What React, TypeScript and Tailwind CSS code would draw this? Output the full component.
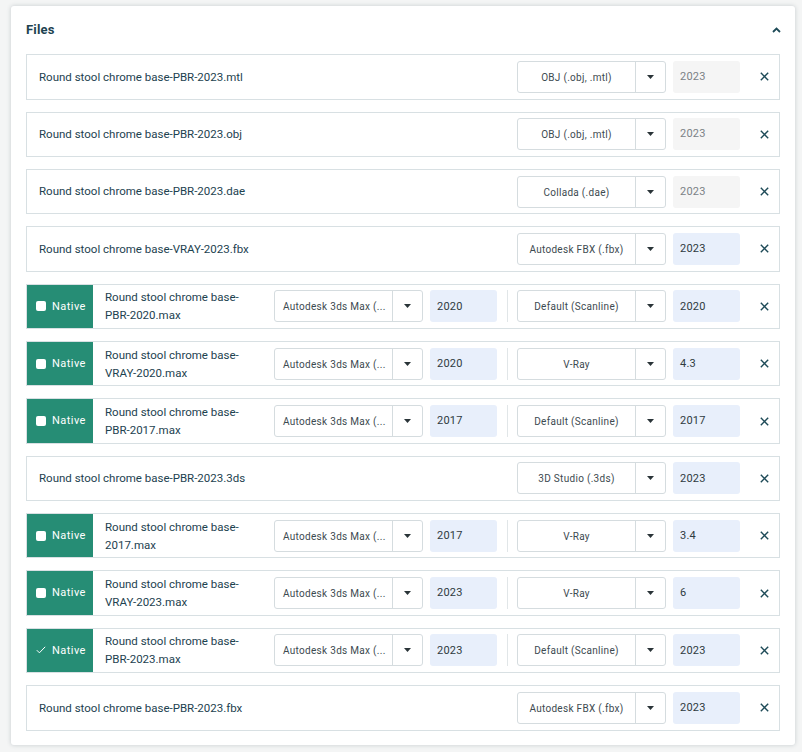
import React from 'react';

type FileRow = {
  name: string;
  format: string;
  version: string;
  disabled?: boolean;
  native?: { checked: boolean; appVersion: string };
};

const files: FileRow[] = [
  { name: 'Round stool chrome base-PBR-2023.mtl', format: 'OBJ (.obj, .mtl)', version: '2023', disabled: true },
  { name: 'Round stool chrome base-PBR-2023.obj', format: 'OBJ (.obj, .mtl)', version: '2023', disabled: true },
  { name: 'Round stool chrome base-PBR-2023.dae', format: 'Collada (.dae)', version: '2023', disabled: true },
  { name: 'Round stool chrome base-VRAY-2023.fbx', format: 'Autodesk FBX (.fbx)', version: '2023' },
  { name: 'Round stool chrome base-PBR-2020.max', format: 'Default (Scanline)', version: '2020', native: { checked: false, appVersion: '2020' } },
  { name: 'Round stool chrome base-VRAY-2020.max', format: 'V-Ray', version: '4.3', native: { checked: false, appVersion: '2020' } },
  { name: 'Round stool chrome base-PBR-2017.max', format: 'Default (Scanline)', version: '2017', native: { checked: false, appVersion: '2017' } },
  { name: 'Round stool chrome base-PBR-2023.3ds', format: '3D Studio (.3ds)', version: '2023' },
  { name: 'Round stool chrome base-2017.max', format: 'V-Ray', version: '3.4', native: { checked: false, appVersion: '2017' } },
  { name: 'Round stool chrome base-VRAY-2023.max', format: 'V-Ray', version: '6', native: { checked: false, appVersion: '2023' } },
  { name: 'Round stool chrome base-PBR-2023.max', format: 'Default (Scanline)', version: '2023', native: { checked: true, appVersion: '2023' } },
  { name: 'Round stool chrome base-PBR-2023.fbx', format: 'Autodesk FBX (.fbx)', version: '2023' },
];

const Select = ({ label, left }: { label: string; left?: boolean }) => (
  <div className="flex h-[32px] w-[149px] shrink-0 rounded-[3px] border border-[#d5dcdf] bg-white text-[#3d4a50]">
    <div className={`flex min-w-0 w-[118px] items-center border-r border-[#d5dcdf] pt-[1px] text-[10px] tracking-[0.3px] whitespace-nowrap ${left ? 'justify-start pl-[8px]' : 'justify-center'}`}>
      {label}
    </div>
    <div className="flex flex-1 items-center justify-center">
      <svg width="7" height="4" viewBox="0 0 7 4"><path d="M0 0h7L3.5 4z" fill="#2a3438" /></svg>
    </div>
  </div>
);

const VersionInput = ({ value, disabled }: { value: string; disabled?: boolean }) => (
  <div className={`ml-[7px] flex h-[32px] w-[67px] shrink-0 items-center rounded-[3px] pl-[7px] pt-[1px] text-[11px] tracking-[0.25px] ${disabled ? 'bg-[#f5f5f5] text-[#7b8286]' : 'bg-[#e8effb] text-[#2f3b40]'}`}>
    {value}
  </div>
);

const Row = ({ file }: { file: FileRow }) => (
  <div className="flex h-[45.36px] items-center border border-[#d8e0e3] bg-white">
    {file.native ? (
      <>
        <div className="flex h-full w-[66px] shrink-0 items-center bg-[#268d75] pl-[9px] text-[11px] tracking-[0.45px] text-white">
          {file.native.checked ? (
            <svg className="w-[10px] shrink-0" width="10" height="8" viewBox="0 0 10 8" fill="none"><path d="M.8 4.2 3.4 6.8 9.2.8" stroke="#fff" strokeWidth="1" /></svg>
          ) : (
            <span className="h-[10px] w-[10px] shrink-0 rounded-[2px] bg-white" />
          )}
          <span className="ml-[6px] pt-[1px]">Native</span>
        </div>
        <div className="w-[181px] shrink-0 pl-[12px] pr-[20px] text-[11.5px] leading-[18px] text-[#1d4250]">{file.name}</div>
        <Select label="Autodesk 3ds Max (..." left />
        <VersionInput value={file.native.appVersion} />
        <div className="mx-[9.5px] h-[32px] w-px shrink-0 bg-[#e1e6e8]" />
      </>
    ) : (
      <div className="flex-1 pl-[12px] pt-[1px] text-[11.5px] text-[#1d4250]">{file.name}</div>
    )}
    <Select label={file.format} />
    <VersionInput value={file.version} disabled={file.disabled} />
    <div className="flex w-[39px] shrink-0 items-center justify-end pr-[10px]">
      <svg width="9" height="9" viewBox="0 0 9 9" fill="none"><path d="M.8.8l7.4 7.4M8.2.8 .8 8.2" stroke="#1d4a57" strokeWidth="1.4" /></svg>
    </div>
  </div>
);

export default function App() {
  return (
    <div className="min-h-screen bg-[#f4f5f5] pl-[11px] pt-[6px]" style={{ fontFamily: 'Roboto, "Noto Sans", sans-serif' }}>
      <div className="h-[739px] w-[784px] rounded-[3px] bg-white px-[15px] shadow-[0_0_4px_rgba(60,80,90,0.25)]">
        <div className="flex h-[48.2px] items-center justify-between pb-[1px]">
          <h2 className="text-[13px] font-bold tracking-[0.2px] text-[#1d4250]">Files</h2>
          <svg className="-mr-[1px]" width="9" height="6" viewBox="0 0 9 6" fill="none"><path d="M1 5l3.5-3.5L8 5" stroke="#1d4a57" strokeWidth="1.8" /></svg>
        </div>
        <div className="flex flex-col gap-[12px]">
          {files.map((f) => (
            <Row key={f.name} file={f} />
          ))}
        </div>
      </div>
    </div>
  );
}
